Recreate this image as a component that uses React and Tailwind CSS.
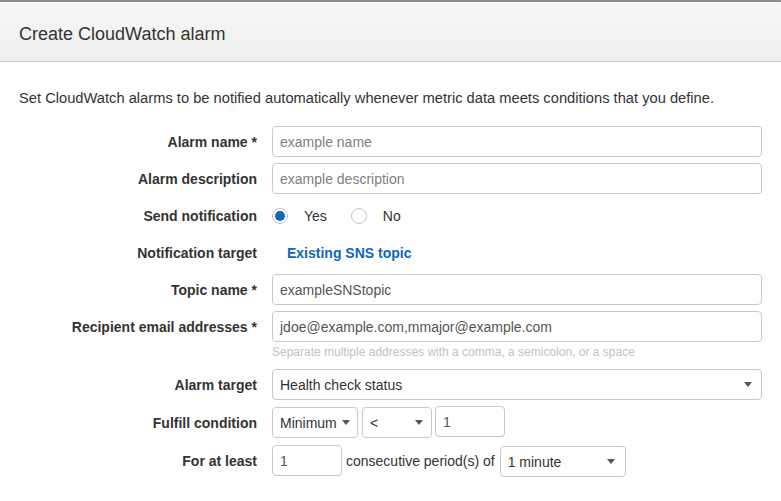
const Caret = () => (
  <svg width="8" height="5" viewBox="0 0 8 5" className="shrink-0">
    <path d="M0 0 H8 L4 5 Z" fill="#555" />
  </svg>
);

const Select = ({ value, className = '' }) => (
  <div className={`flex items-center justify-between border border-[#c8c8c8] rounded-[4px] bg-white pl-[7px] pr-[9px] text-[#333] ${className}`}>
    <span>{value}</span>
    <Caret />
  </div>
);

const Input = ({ value, placeholder, className = '' }) => (
  <div className={`flex items-center border border-[#c8c8c8] rounded-[4px] bg-white px-[7px] ${className}`}>
    {value ? <span className="text-[#555]">{value}</span> : <span className="text-[#808080]">{placeholder}</span>}
  </div>
);

const Row = ({ label, className = '', children }) => (
  <div className={`flex items-center ${className}`}>
    <div className="w-[257px] shrink-0 text-right font-bold text-[#333]">{label}</div>
    <div className="ml-[15px] mr-[19px] flex-1 flex items-center h-full">{children}</div>
  </div>
);

const Radio = ({ checked, label }) => (
  <div className="flex items-center">
    <div className="w-[16px] h-[16px] rounded-full border border-[#c4c4c4] bg-white flex items-center justify-center">
      {checked && <div className="w-[10px] h-[10px] rounded-full bg-[#1166bb]" />}
    </div>
    <span className="ml-[16px] text-[#333]">{label}</span>
  </div>
);

const App = () => {
  return (
    <div className="w-[781px] h-[501px] bg-white overflow-hidden text-[14px] leading-[20px]" style={{ fontFamily: '"Liberation Sans", Arial, sans-serif' }}>
      <div className="border-t-2 border-[#8a8a8a] h-[62px] bg-gradient-to-b from-[#f7f7f7] to-[#efefef] border-b border-b-[#cfcfcf] flex items-center px-[19px] pt-[4px]">
        <h1 className="text-[18px] text-[#333] font-normal">Create CloudWatch alarm</h1>
      </div>

      <p className="mt-[26px] px-[19px] text-[14.7px] text-[#333]">
        Set CloudWatch alarms to be notified automatically whenever metric data meets conditions that you define.
      </p>

      <Row label="Alarm name *" className="mt-[18px] h-[31px]">
        <Input placeholder="example name" className="w-full h-[31px]" />
      </Row>
      <Row label="Alarm description" className="mt-[6px] h-[31px]">
        <Input placeholder="example description" className="w-full h-[31px]" />
      </Row>
      <Row label="Send notification" className="mt-[7px] h-[30px]">
        <Radio checked label="Yes" />
        <div className="ml-[24px]">
          <Radio label="No" />
        </div>
      </Row>
      <Row label="Notification target" className="mt-[7px] h-[30px]">
        <span className="ml-[15px] font-bold text-[#1166bb]">Existing SNS topic</span>
      </Row>
      <Row label="Topic name *" className="mt-[6px] h-[31px]">
        <Input value="exampleSNStopic" className="w-full h-[31px]" />
      </Row>
      <Row label="Recipient email addresses *" className="mt-[6px] h-[31px]">
        <Input value="jdoe@example.com,mmajor@example.com" className="w-full h-[31px]" />
      </Row>
      <div className="mt-[2px] ml-[272px] text-[12px] leading-[16px] text-[#c2c2c2]">
        Separate multiple addresses with a comma, a semicolon, or a space
      </div>
      <Row label="Alarm target" className="mt-[9px] h-[31px]">
        <Select value="Health check status" className="w-full h-[31px]" />
      </Row>
      <Row label="Fulfill condition" className="mt-[7px] h-[31px]">
        <Select value="Minimum" className="w-[86px] h-[31px] !pr-[7px]" />
        <Select value="<" className="ml-[4px] w-[70px] h-[31px] !pr-[8px]" />
        <Input value="1" className="ml-[3px] w-[70px] h-[31px] -mt-[2px]" />
      </Row>
      <Row label="For at least" className="mt-[7px] h-[31px]">
        <Input value="1" className="w-[70px] h-[31px]" />
        <span className="ml-[4px] text-[#333]">consecutive period(s) of</span>
        <Select value="1 minute" className="ml-[5px] w-[126px] h-[31px] mt-[2px] !pr-[10px]" />
      </Row>
    </div>
  );
};

export default App;
